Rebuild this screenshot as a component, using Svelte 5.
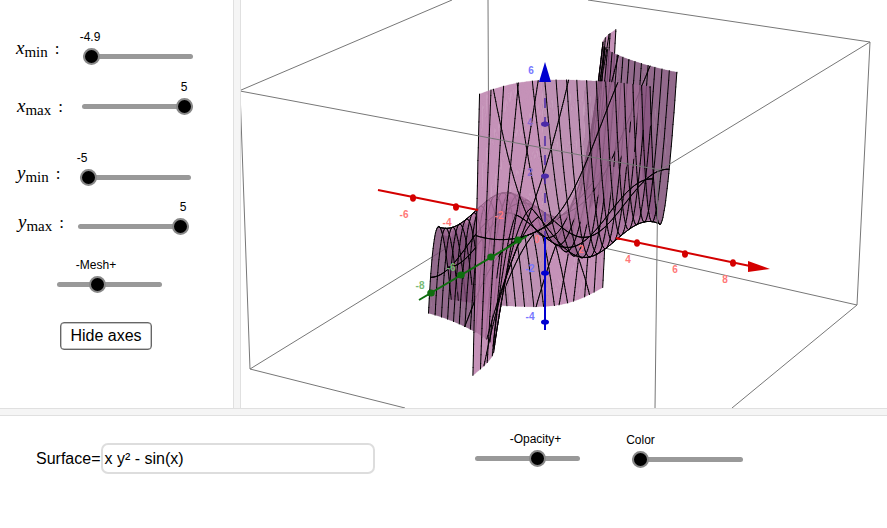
<script>
  const P = -0.0047, Q = 0.0102, R = -0.005;
  const Z0 = -4.35, Z1 = 6.5;
  const X0 = -4.9, X1 = 5, Y0 = -5, Y1 = 5;
  const LAYERS = 18, SHADES = 5, MESH_X = 30, MESH_Y = 16, LINE_DELAY = 2;
  const f = (x, y) => x * y * y - Math.sin(x);
  const wOf = (x, y, z) => 1 + P * x + Q * y + R * z;
  function proj(x, y, z) {
    const w = wOf(x, y, z);
    return [545 + (22.4 * x + 13.2 * y) / w, 225 + (4.6 * x - 7.9 * y - 24.7 * z) / w];
  }
  const WMAX = 1.1, WMIN = 0.9;
  const layerOf = (w) => Math.max(0, Math.min(LAYERS - 1, Math.floor(((WMAX - w) / (WMAX - WMIN)) * LAYERS)));

  function clip(poly, test, lim) {
    const out = [];
    for (let i = 0; i < poly.length; i++) {
      const a = poly[i], b = poly[(i + 1) % poly.length];
      const ia = test(a[2]), ib = test(b[2]);
      if (ia) out.push(a);
      if (ia !== ib) {
        const t = (lim - a[2]) / (b[2] - a[2]);
        out.push([a[0] + t * (b[0] - a[0]), a[1] + t * (b[1] - a[1]), lim]);
      }
    }
    return out;
  }
  const below = (z) => z <= Z1, above = (z) => z >= Z0;

  function build() {
    const fills = Array.from({ length: LAYERS }, () => Array.from({ length: SHADES }, () => []));
    const lines = Array.from({ length: LAYERS }, () => []);
    const nx = 220, ny = 100;
    const dx = (X1 - X0) / nx, dy = (Y1 - Y0) / ny;
    for (let i = 0; i < nx; i++) {
      for (let j = 0; j < ny; j++) {
        const x = X0 + i * dx, y = Y0 + j * dy, x2 = x + dx, y2 = y + dy;
        let poly = [[x, y, f(x, y)], [x2, y, f(x2, y)], [x2, y2, f(x2, y2)], [x, y2, f(x, y2)]];
        poly = clip(poly, below, Z1);
        if (poly.length < 3) continue;
        poly = clip(poly, above, Z0);
        if (poly.length < 3) continue;
        const cx = (x + x2) / 2, cy = (y + y2) / 2;
        const fx = cy * cy - Math.cos(cx), fy = 2 * cx * cy;
        const len = Math.hypot(fx, fy, 1);
        const b = Math.abs(0.85 * fx - 0.25 * fy + 0.45) / len;
        const shade = Math.min(SHADES - 1, Math.floor(b * SHADES));
        let w = 0;
        for (const p of poly) w += wOf(p[0], p[1], p[2]);
        w /= poly.length;
        let pts = poly.map((p) => proj(p[0], p[1], p[2]));
        let area = 0;
        for (let k = 0; k < pts.length; k++) {
          const a = pts[k], c = pts[(k + 1) % pts.length];
          area += a[0] * c[1] - c[0] * a[1];
        }
        if (area < 0) pts.reverse();
        fills[layerOf(w)][shade].push('M' + pts.map((p) => p[0].toFixed(1) + ' ' + p[1].toFixed(1)).join('L') + 'Z');
      }
    }
    function segment(a, b) {
      let z1 = a[2], z2 = b[2];
      if ((z1 > Z1 && z2 > Z1) || (z1 < Z0 && z2 < Z0)) return;
      let s = [a, b];
      const cut = (p, q, lim) => {
        const t = (lim - p[2]) / (q[2] - p[2]);
        return [p[0] + t * (q[0] - p[0]), p[1] + t * (q[1] - p[1]), lim];
      };
      if (s[0][2] > Z1) s[0] = cut(a, b, Z1);
      else if (s[0][2] < Z0) s[0] = cut(a, b, Z0);
      if (s[1][2] > Z1) s[1] = cut(a, b, Z1);
      else if (s[1][2] < Z0) s[1] = cut(a, b, Z0);
      const m = wOf((s[0][0] + s[1][0]) / 2, (s[0][1] + s[1][1]) / 2, (s[0][2] + s[1][2]) / 2);
      const p = proj(...s[0]), q = proj(...s[1]);
      const slot = Math.min(LAYERS - 1, layerOf(m) + LINE_DELAY);
      lines[slot].push(`M${p[0].toFixed(1)} ${p[1].toFixed(1)}L${q[0].toFixed(1)} ${q[1].toFixed(1)}`);
    }
    for (let i = 0; i <= MESH_X; i++) {
      const x = X0 + (i * (X1 - X0)) / MESH_X;
      for (let t = 0; t < 200; t++) {
        const a = Y0 + (t * (Y1 - Y0)) / 200, b = a + (Y1 - Y0) / 200;
        segment([x, a, f(x, a)], [x, b, f(x, b)]);
      }
    }
    for (let j = 0; j <= MESH_Y; j++) {
      const y = Y0 + (j * (Y1 - Y0)) / MESH_Y;
      for (let t = 0; t < 500; t++) {
        const a = X0 + (t * (X1 - X0)) / 500, b = a + (X1 - X0) / 500;
        segment([a, y, f(a, y)], [b, y, f(b, y)]);
      }
    }
    return fills.map((shades, i) => ({ shades: shades.map((s) => s.join('')), line: lines[i].join('') }));
  }
  const layers = build();
  const shadeColor = ['#7c4a73', '#8c5683', '#a06a94', '#b07aa4', '#b97ba9'];

  const ticks = {
    red: [[413, 198], [456, 207], [637, 243], [685, 254], [733, 263]],
    green: [[431, 293], [461, 275], [491, 257], [518, 240]],
    blue: [[545, 273], [545, 322]],
    violet: [[545, 124], [545, 176]]
  };
  const labels = [
    ['red', -6, 404, 218], ['red', -4, 447, 226], ['red', -2, 499, 219], ['red', 2, 581, 253], ['red', 4, 628, 263], ['red', 6, 675, 273], ['red', 8, 725, 283], ['red', 0, 537, 243],
    ['green', -8, 420, 289], ['green', -6, 451, 271],
    ['blue', 6, 531, 74], ['violet', 4, 530, 126], ['violet', 2, 530, 176], ['blue', -2, 530, 272], ['blue', -4, 530, 320]
  ];
</script>

{#snippet slider(width, thumb, text, textX, cls = '')}
  <div class="slider {cls}" style:width="{width}px">
    <div class="track"></div>
    <div class="thumb" style:left="{thumb}px"></div>
    <div class="value" style:left="{textX}px">{text}</div>
  </div>
{/snippet}

{#snippet math(v, sub)}
  <span class="math"><i>{v}</i><sub>{sub}</sub><span class="colon">:</span></span>
{/snippet}

<div class="app">
  <div class="top">
    <aside class="side">
      <div class="row r1">{@render math('x', 'min')}{@render slider(110, 8, '-4.9', 7)}</div>
      <div class="row r2">{@render math('x', 'max')}{@render slider(111, 102, '5', 102)}</div>
      <div class="row r3">{@render math('y', 'min')}{@render slider(111, 8, '-5', 2)}</div>
      <div class="row r4">{@render math('y', 'max')}{@render slider(111, 102, '5', 105)}</div>
      <div class="row r5">{@render slider(105, 40, '-Mesh+', 39)}</div>
      <button class="hide">Hide axes</button>
    </aside>
    <div class="splitter-v"></div>
    <main class="graph">
      <svg viewBox="241 0 646 408" width="646" height="408" role="img" aria-label="3D surface plot">
        <g class="box back">
          <path d="M488 0L489 222M250 369L489 222L857 305M240 90.5L452 0M588 0L870 42" />
        </g>
        <g class="under">
          <path class="ax-red dash" d="M478 209L620 239" />
        </g>
        {#each layers as layer}
          {#each layer.shades as d, s}
            {#if d}<path class="skin" fill={shadeColor[s]} stroke={shadeColor[s]} {d} />{/if}
          {/each}
          {#if layer.line}<path class="mesh" d={layer.line} />{/if}
        {/each}
        <g class="box">
          <path d="M240 91L250 369L405 408M660 170L240 91M660 170L870 42L857 305L732 408M658 170L655 408" />
        </g>
        <path class="ax-red" d="M378 190L478 210M616 238L750 266" />
        <polygon class="fill-red" points="748,261 770,269 748,272" />
        <path class="ax-green" d="M419 300L527 236" />
        <path class="ax-blue" d="M545 237L545 330" />
        <path class="ax-violet" d="M545 98L545 236" />
        <polygon class="fill-blue" points="545,62 539,82 551,82" />
        {#each ticks.red as [x, y]}<ellipse class="fill-red" cx={x} cy={y} rx="3" ry="3.8" />{/each}
        {#each ticks.green as [x, y]}<ellipse class="fill-green" cx={x} cy={y} rx="3.8" ry="3.6" />{/each}
        {#each ticks.blue as [x, y]}<ellipse class="fill-blue" cx={x} cy={y} rx="4" ry="2.6" />{/each}
        {#each ticks.violet as [x, y]}<ellipse class="fill-violet" cx={x} cy={y} rx="4" ry="2.6" />{/each}
        {#each labels as [c, t, x, y]}<text class="tick t-{c}" {x} {y}>{t}</text>{/each}
      </svg>
    </main>
  </div>
  <div class="splitter-h"></div>
  <section class="bottom">
    <label class="surface">Surface=<input value="x y² - sin(x)" readonly /></label>
    <div class="op">{@render slider(105, 62, '-Opacity+', 60)}</div>
    <div class="col">{@render slider(111, 8, 'Color', 8)}</div>
  </section>
</div>

<style>
  :global(body) { margin: 0; background: #fff; }
  .app { width: 887px; height: 528px; overflow: hidden; font-family: "Liberation Sans", Arial, sans-serif; color: #000; background: #fff; }
  .top { display: flex; height: 408px; }
  .side { width: 233px; flex: none; display: flex; flex-direction: column; box-sizing: border-box; }
  .splitter-v { width: 8px; flex: none; box-sizing: border-box; background: #f5f5f5; border-left: 1px solid #e0e0e0; border-right: 1px solid #e0e0e0; }
  .graph { flex: 1; min-width: 0; overflow: hidden; }
  .graph svg { display: block; }
  .splitter-h { height: 8px; box-sizing: border-box; background: #f5f5f5; border-top: 1px solid #e0e0e0; border-bottom: 1px solid #e0e0e0; }

  .row { display: flex; align-items: center; height: 40px; }
  .r1 { margin-top: 36px; }
  .r2 { margin-top: 10px; }
  .r3 { margin-top: 31px; }
  .r4 { margin-top: 9px; }
  .r5 { margin-top: 18px; padding-left: 57px; }
  .math { display: block; box-sizing: border-box; height: 26px; padding-left: 16px; margin-bottom: 17px; font-family: "Liberation Serif", serif; font-size: 19px; line-height: 26px; white-space: nowrap; }
  .r1 .math { width: 83px; }
  .r2 .math { width: 82px; margin-bottom: 0; padding-left: 17px; }
  .r3 .math { width: 80px; margin-bottom: 9px; padding-left: 17px; }
  .r4 .math { width: 78px; margin-bottom: 8px; padding-left: 18px; }
  .math sub { font-size: 15px; vertical-align: baseline; position: relative; top: 3px; }
  .colon { margin-left: 7px; font-size: 17px; }

  .slider { position: relative; height: 40px; flex: none; }
  .track { position: absolute; left: 0; right: 0; top: 18px; height: 5px; border-radius: 3px; background: #999; }
  .thumb { position: absolute; top: 20px; box-sizing: border-box; width: 17px; height: 17px; margin: -8px 0 0 -8.5px; border-radius: 50%; background: #000; border: 2.5px solid #888; }
  .value { position: absolute; top: -5px; transform: translateX(-50%); font-size: 12px; line-height: 12px; white-space: nowrap; }

  .hide { display: block; box-sizing: border-box; width: 92px; height: 28px; margin: 18px 0 0 60px; padding: 0; background: #fff; border: 1px solid #666; box-shadow: inset 0 0 0 0.5px #888; border-radius: 4px; font: 16px "Liberation Sans", Arial, sans-serif; color: #000; }

  .bottom { display: flex; align-items: flex-start; padding: 27px 0 0 36px; }
  .surface { display: flex; align-items: center; height: 31px; font-size: 16px; }
  .surface input { box-sizing: border-box; width: 274px; height: 31px; margin-left: 1px; padding: 0 0 0 1px; border: 2px solid #ddd; border-radius: 7px; font: 16px "Liberation Sans", Arial, sans-serif; color: #000; outline: none; background: #fff; }
  .op { margin: -5px 0 0 100px; }
  .col { margin: -4px 0 0 52px; }

  .box path { fill: none; stroke: #777; stroke-width: 1; }
  .skin { opacity: 0.82; stroke-width: 0.2; }
  .mesh { fill: none; stroke: #000; stroke-width: 1; stroke-linecap: round; }
  .ax-red, .ax-green, .ax-blue, .ax-violet { fill: none; stroke-width: 2; }
  .ax-red { stroke: #d40000; }
  .dash { stroke-dasharray: 6 8; }
  .ax-green { stroke: #0f6e0f; }
  .ax-blue { stroke: #0000d0; }
  .ax-violet { stroke: #4a2aa8; stroke-dasharray: 10 9; opacity: 0.75; }
  .fill-red { fill: #d40000; }
  .fill-green { fill: #0f6e0f; }
  .fill-blue { fill: #0000d0; }
  .fill-violet { fill: #4a2aa8; }
  .tick { font-family: "Liberation Sans", Arial, sans-serif; font-size: 10px; font-weight: 700; text-anchor: middle; }
  .t-red { fill: #f77; }
  .t-green { fill: #7b7; }
  .t-blue { fill: #77f; }
  .t-violet { fill: #86c; }
</style>
